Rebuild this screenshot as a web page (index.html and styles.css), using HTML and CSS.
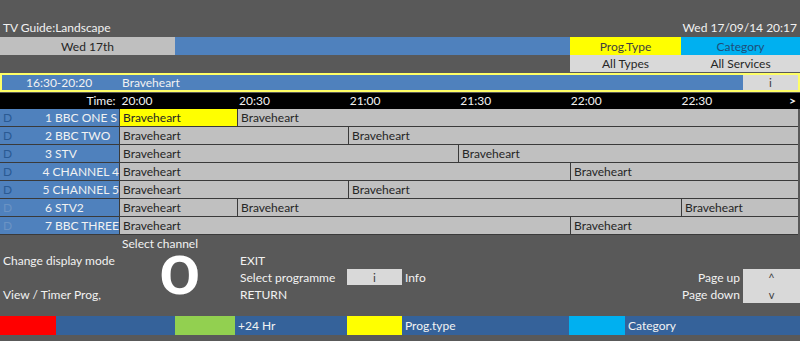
FILE: index.html
```html
<!DOCTYPE html>
<html lang="en">
<head>
  <meta charset="UTF-8">
  <meta name="viewport" content="width=device-width, initial-scale=1.0">
  <title>TV Guide:Landscape</title>
  <link rel="stylesheet" href="styles.css">
</head>
<body>
  <div class="screen">
    <!-- Заголовок -->
    <div class="title-row">
      <span>TV Guide:Landscape</span>
      <span>Wed 17/09/14 20:17</span>
    </div>

    <div class="date-row">
      <div class="day">Wed 17th</div>
      <div class="fill"></div>
      <div class="prog-type">Prog.Type</div>
      <div class="category">Category</div>
    </div>

    <div class="filter-row">
      <div class="fill-dark"></div>
      <div class="filter">All Types</div>
      <div class="filter filter-wide">All Services</div>
    </div>

    <!-- Поточна програма -->
    <div class="now-bar">
      <div class="now-info">
        <span class="now-time">16:30-20:20</span>
        <span class="now-title">Braveheart</span>
      </div>
      <div class="now-key">i</div>
    </div>

    <div class="time-row">
      <div class="time-label">Time:</div>
      <div class="slot slot-first">20:00</div>
      <div class="slot">20:30</div>
      <div class="slot">21:00</div>
      <div class="slot">21:30</div>
      <div class="slot">22:00</div>
      <div class="slot">22:30</div>
      <div class="more">&gt;</div>
    </div>

    <!-- Сітка каналів -->
    <div class="grid">
      <div class="channel"><span class="mode">D</span><span class="name">1 BBC ONE S</span></div>
      <div class="progs">
        <div class="prog selected" style="width: 117px">Braveheart</div>
        <div class="prog rest">Braveheart</div>
      </div>

      <div class="channel"><span class="mode">D</span><span class="name">2 BBC TWO</span></div>
      <div class="progs">
        <div class="prog" style="width: 228px">Braveheart</div>
        <div class="prog rest">Braveheart</div>
      </div>

      <div class="channel"><span class="mode">D</span><span class="name">3 STV</span></div>
      <div class="progs">
        <div class="prog" style="width: 338px">Braveheart</div>
        <div class="prog rest">Braveheart</div>
      </div>

      <div class="channel"><span class="mode">D</span><span class="name">4 CHANNEL 4</span></div>
      <div class="progs">
        <div class="prog" style="width: 450px">Braveheart</div>
        <div class="prog rest">Braveheart</div>
      </div>

      <div class="channel"><span class="mode">D</span><span class="name">5 CHANNEL 5</span></div>
      <div class="progs">
        <div class="prog" style="width: 228px">Braveheart</div>
        <div class="prog rest">Braveheart</div>
      </div>

      <div class="channel"><span class="mode dim">D</span><span class="name">6 STV2</span></div>
      <div class="progs">
        <div class="prog" style="width: 117px">Braveheart</div>
        <div class="prog" style="width: 443px">Braveheart</div>
        <div class="prog rest">Braveheart</div>
      </div>

      <div class="channel"><span class="mode dim">D</span><span class="name">7 BBC THREE</span></div>
      <div class="progs">
        <div class="prog" style="width: 450px">Braveheart</div>
        <div class="prog rest">Braveheart</div>
      </div>
    </div>

    <!-- Підказки -->
    <div class="help">
      <div class="h-select">Select channel</div>
      <div class="h-mode">Change display mode</div>
      <div class="h-big"><span>O</span></div>
      <div class="h-exit">EXIT</div>
      <div class="h-prog">Select programme</div>
      <div class="key h-key">i</div>
      <div class="h-info">Info</div>
      <div class="h-up">Page up</div>
      <div class="h-down">Page down</div>
      <div class="key h-pages"><span>^</span><span>v</span></div>
      <div class="h-view">View / Timer Prog,</div>
      <div class="h-return">RETURN</div>
    </div>

    <div class="color-bar">
      <div class="swatch red"></div>
      <div class="gap-a"></div>
      <div class="swatch green"></div>
      <div class="bar-text w-110">+24 Hr</div>
      <div class="swatch yellow"></div>
      <div class="bar-text w-167">Prog.type</div>
      <div class="swatch cyan"></div>
      <div class="bar-text">Category</div>
    </div>
  </div>
</body>
</html>
```

FILE: styles.css
```css
body {
  margin: 0;
  background-color: #595959;
  font-family: Lato, "Open Sans", sans-serif;
  font-size: 12px;
  color: #f2f2f2;
}

.screen {
  width: 800px;
  height: 341px;
  padding-top: 18px;
  box-sizing: border-box;
}

.title-row {
  height: 19px;
  display: flex;
  justify-content: space-between;
  align-items: center;
  padding: 0 3px;
}

/* Рядок дати і фільтрів */
.date-row, .filter-row {
  display: flex;
  height: 18px;
  line-height: 19px;
}

.filter-row {
  height: 17px;
  line-height: 18px;
}

.day {
  width: 175px;
  background-color: #bfbfbf;
  color: #262626;
  text-align: center;
}

.fill {
  width: 395px;
  background-color: #4f81bd;
}

.fill-dark {
  width: 570px;
}

.prog-type {
  width: 111px;
  background-color: #ffff00;
  color: #404040;
  text-align: center;
}

.category {
  flex: 1;
  background-color: #00b0f0;
  color: #1f4e79;
  text-align: center;
}

.filter {
  width: 111px;
  background-color: #d9d9d9;
  color: #262626;
  text-align: center;
}

.filter-wide {
  width: auto;
  flex: 1;
}

/* Поточна програма */
.now-bar {
  display: flex;
  height: 15px;
  margin-top: 1px;
  border: 2px solid #ffff66;
  line-height: 15px;
}

.now-info {
  width: 741px;
  background-color: #4f81bd;
  display: flex;
}

.now-time {
  width: 120px;
  padding-left: 24px;
  box-sizing: border-box;
}

.now-key {
  flex: 1;
  background-color: #d9d9d9;
  color: #404040;
  text-align: center;
}

.time-row {
  display: flex;
  height: 16px;
  line-height: 16px;
  margin-top: 1px;
  background-color: #000;
  color: #f2f2f2;
}

.time-label {
  width: 119px;
  padding-right: 3px;
  text-align: right;
  box-sizing: border-box;
}

.slot {
  width: 111px;
  padding-left: 3px;
  box-sizing: border-box;
}

.slot-first {
  width: 118px;
}

.more {
  flex: 1;
  text-align: right;
  padding-right: 4px;
  font-weight: bold;
}

/* Сітка каналів */
.grid {
  display: grid;
  grid-template-columns: 119px 679px;
  grid-auto-rows: 17px;
  row-gap: 1px;
  background-color: #3a3a3a;
  width: 798px;
  border-bottom: 1px solid #3a3a3a;
}

.channel {
  display: flex;
  background-color: #4f81bd;
  line-height: 17px;
}

.mode {
  width: 45px;
  padding-left: 3px;
  box-sizing: border-box;
  color: #2a5a93;
}

.mode.dim {
  color: #6b93c4;
}

.name {
  color: #f2f2f2;
  white-space: nowrap;
}

.progs {
  display: flex;
  gap: 1px;
  border-left: 1px solid #3a3a3a;
}

.prog {
  background-color: #c0c0c0;
  color: #262626;
  line-height: 17px;
  padding-left: 3px;
  box-sizing: border-box;
  white-space: nowrap;
  overflow: hidden;
}

.prog.selected {
  background-color: #ffff00;
}

.prog.rest {
  flex: 1;
}

/* Підказки */
.help {
  display: grid;
  grid-template-columns: 119px 118px 110px 55px 190px 151px 57px;
  grid-template-rows: 17px 17px 17px 17px;
  line-height: 17px;
}

.h-select { grid-area: 1 / 2 / 2 / 4; padding-left: 3px; }
.h-mode { grid-area: 2 / 1; padding-left: 3px; white-space: nowrap; }
.h-view { grid-area: 4 / 1; padding-left: 3px; white-space: nowrap; }
.h-exit { grid-area: 2 / 3; padding-left: 3px; }
.h-prog { grid-area: 3 / 3; padding-left: 3px; white-space: nowrap; }
.h-return { grid-area: 4 / 3; padding-left: 3px; }
.h-info { grid-area: 3 / 5; padding-left: 3px; }
.h-up { grid-area: 3 / 6; text-align: right; padding-right: 3px; }
.h-down { grid-area: 4 / 6; text-align: right; padding-right: 3px; }

.h-big {
  grid-area: 2 / 2 / 5 / 3;
  display: flex;
  justify-content: center;
  align-items: flex-start;
}

.h-big span {
  font-family: Roboto, sans-serif;
  font-size: 54px;
  font-weight: bold;
  color: #fff;
  line-height: 48px;
  margin: 0 0 0 4px;
  transform: scaleX(1.1);
}

.key {
  background-color: #d9d9d9;
  color: #404040;
  text-align: center;
}

.h-key {
  grid-area: 3 / 4;
  margin: 0 0 1px;
}

.h-pages {
  grid-area: 3 / 7 / 5 / 8;
  display: flex;
  flex-direction: column;
  font-size: 11px;
}

.h-pages span {
  height: 17px;
}

/* Кольорові кнопки */
.color-bar {
  display: flex;
  height: 19px;
  margin-top: 13px;
  background-color: #35629a;
  line-height: 19px;
}

.swatch {
  width: 56px;
}

.red { background-color: #ff0000; }
.green { background-color: #92d050; width: 60px; }
.yellow { background-color: #ffff00; width: 55px; }
.cyan { background-color: #00b0f0; }

.gap-a { width: 119px; }

.bar-text {
  padding-left: 3px;
  box-sizing: border-box;
}

.w-110 { width: 112px; }
.w-167 { width: 167px; }
```
